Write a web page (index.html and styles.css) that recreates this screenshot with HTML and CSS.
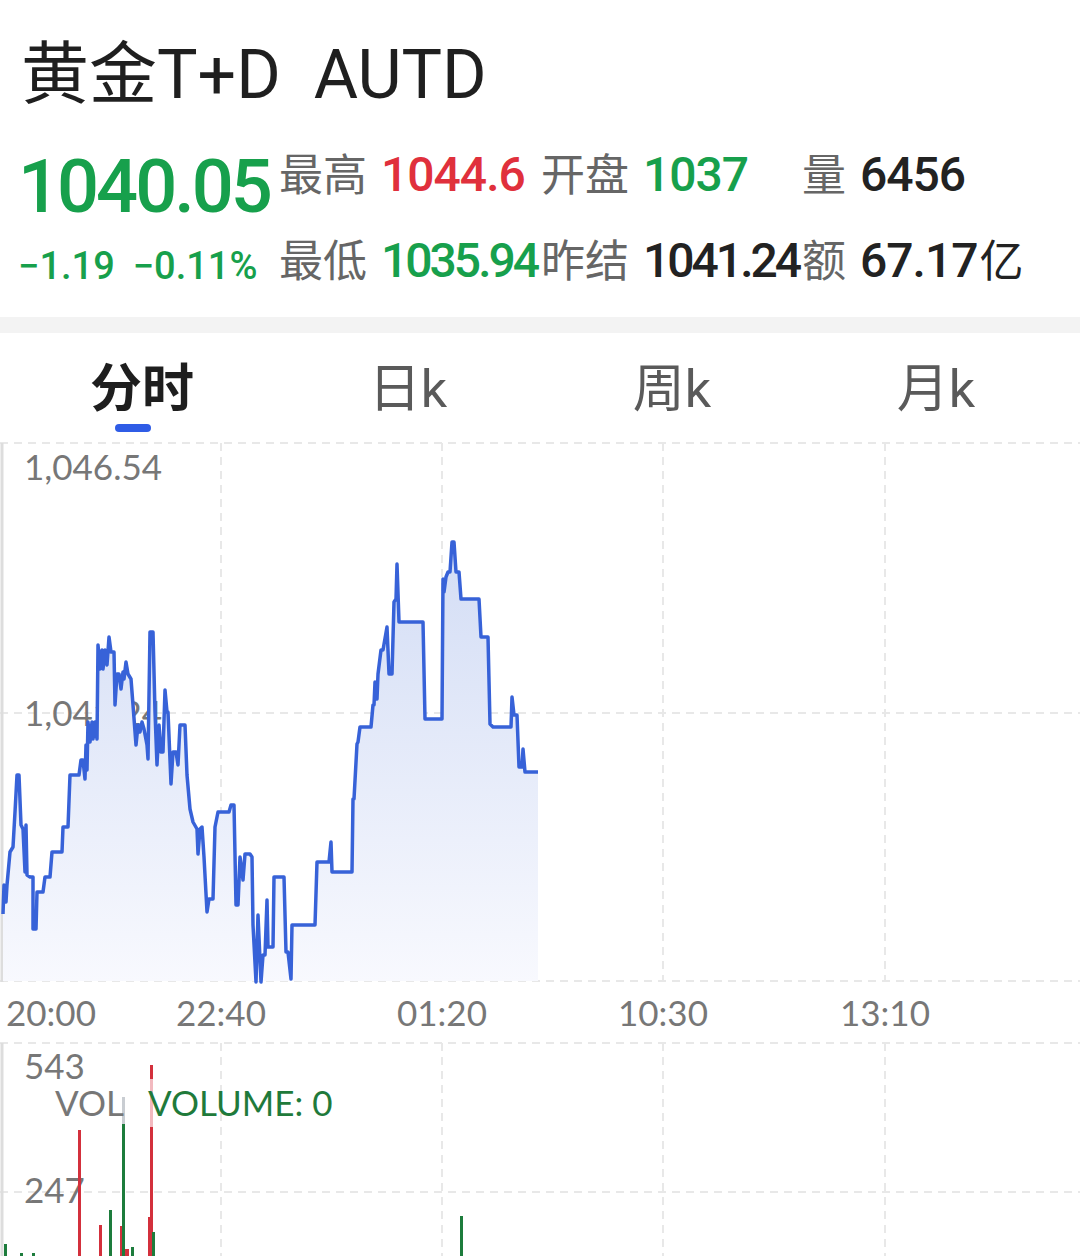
FILE: index.html
```html
<!DOCTYPE html>
<html lang="zh-CN">
<head>
<meta charset="utf-8">
<title>黄金T+D AUTD</title>
<link rel="stylesheet" href="styles.css">
</head>
<body>
<div class="page">
  <header class="head">
    <h1 class="title">黄金T+D AUTD</h1>
    <div class="quote">
      <div class="big">1040.05</div>
      <div class="cell"><span class="lbl">最高</span><span class="num red">1044.6</span></div>
      <div class="cell"><span class="lbl">开盘</span><span class="num green">1037</span></div>
      <div class="cell"><span class="lbl">量</span><span class="num dark">6456</span></div>
      <div class="change"><span>−1.19</span><span>−0.11%</span></div>
      <div class="cell r2"><span class="lbl">最低</span><span class="num green tight">1035.94</span></div>
      <div class="cell r2"><span class="lbl">昨结</span><span class="num dark tight">1041.24</span></div>
      <div class="cell r2"><span class="lbl">额</span><span class="num dark">67.17<span class="unit">亿</span></span></div>
    </div>
  </header>
  <div class="band"></div>
  <nav class="tabs">
    <div class="tab active"><span class="tab-text">分时</span><span class="ind"></span></div>
    <div class="tab"><span class="tab-text">日k</span></div>
    <div class="tab"><span class="tab-text">周k</span></div>
    <div class="tab"><span class="tab-text">月k</span></div>
  </nav>
  <section class="chart">
    <svg class="price-svg" width="1080" height="600" viewBox="0 438 1080 600">
      <defs>
        <linearGradient id="fillg" x1="0" y1="540" x2="0" y2="980" gradientUnits="userSpaceOnUse">
          <stop offset="0" stop-color="#d3ddf5"/>
          <stop offset="1" stop-color="#f8f9fe"/>
        </linearGradient>
      </defs>
      <line class="grid" x1="0" y1="441" x2="1080" y2="441"/>
      <line class="grid" x1="0" y1="711" x2="1080" y2="711"/>
      <line class="grid" x1="0" y1="979" x2="1080" y2="979"/>
      <line class="grid" x1="221" y1="441" x2="221" y2="979"/>
      <line class="grid" x1="442" y1="441" x2="442" y2="979"/>
      <line class="grid" x1="663" y1="441" x2="663" y2="979"/>
      <line class="grid" x1="885" y1="441" x2="885" y2="979"/>
      <line class="axis" x1="2" y1="441" x2="2" y2="980"/>
      <text class="ax-label" x="24" y="478">1,046.54</text>
      <text class="ax-label" x="24" y="724">1,041.24</text>
      <text class="ax-label" x="24" y="970">1,035.94</text>
      <path class="pfill" d="M3,979 L3,912 4,883 6,900 7,883 10,850 13,845 15,810 17,773 19,773 21,823 23,827 25,870 26,823 27,873 30,875 33,875 33,927 36,927 37,890 43,890 45,875 50,875 52,850 62,850 63,825 68,825 70,773 79,773 81,758 83,758 85,777 86,743 87,768 88,720 90,740 92,720 93,737 95,720 97,737 98,643 100,667 102,648 103,667 105,648 107,663 109,635 111,650 114,650 115,703 117,672 119,672 121,687 123,670 124,677 126,660 128,672 131,677 133,703 136,743 138,723 140,730 142,720 144,727 147,743 148,757 150,630 153,630 155,710 157,763 159,723 161,750 163,750 165,688 167,710 168,710 171,782 173,750 176,750 178,763 180,723 185,723 187,773 190,807 193,820 197,827 198,852 200,827 202,825 204,855 207,910 209,897 213,897 215,825 218,810 229,810 231,803 234,803 236,903 238,903 240,855 243,878 245,852 250,852 252,855 253,923 256,980 258,913 261,980 263,953 265,953 267,898 268,945 273,945 274,875 284,875 286,950 288,950 291,977 292,923 315,923 317,860 329,860 331,840 332,870 352,870 353,797 354,797 357,742 358,740 360,725 371,725 373,703 374,703 375,680 377,697 378,672 381,648 383,648 387,625 389,672 392,672 394,600 396,597 397,562 399,620 423,620 425,717 442,717 443,577 444,590 446,575 448,570 450,570 452,540 454,540 456,570 459,570 461,597 479,597 481,635 488,635 490,722 493,725 511,725 512,695 514,713 517,713 519,765 522,765 523,747 525,770 538,770 L538,979 Z"/>
      <polyline class="pline" points="3,912 4,883 6,900 7,883 10,850 13,845 15,810 17,773 19,773 21,823 23,827 25,870 26,823 27,873 30,875 33,875 33,927 36,927 37,890 43,890 45,875 50,875 52,850 62,850 63,825 68,825 70,773 79,773 81,758 83,758 85,777 86,743 87,768 88,720 90,740 92,720 93,737 95,720 97,737 98,643 100,667 102,648 103,667 105,648 107,663 109,635 111,650 114,650 115,703 117,672 119,672 121,687 123,670 124,677 126,660 128,672 131,677 133,703 136,743 138,723 140,730 142,720 144,727 147,743 148,757 150,630 153,630 155,710 157,763 159,723 161,750 163,750 165,688 167,710 168,710 171,782 173,750 176,750 178,763 180,723 185,723 187,773 190,807 193,820 197,827 198,852 200,827 202,825 204,855 207,910 209,897 213,897 215,825 218,810 229,810 231,803 234,803 236,903 238,903 240,855 243,878 245,852 250,852 252,855 253,923 256,980 258,913 261,980 263,953 265,953 267,898 268,945 273,945 274,875 284,875 286,950 288,950 291,977 292,923 315,923 317,860 329,860 331,840 332,870 352,870 353,797 354,797 357,742 358,740 360,725 371,725 373,703 374,703 375,680 377,697 378,672 381,648 383,648 387,625 389,672 392,672 394,600 396,597 397,562 399,620 423,620 425,717 442,717 443,577 444,590 446,575 448,570 450,570 452,540 454,540 456,570 459,570 461,597 479,597 481,635 488,635 490,722 493,725 511,725 512,695 514,713 517,713 519,765 522,765 523,747 525,770 538,770"/>
      <text class="ax-label" x="6" y="1024">20:00</text>
      <text class="ax-label mid" x="221" y="1024">22:40</text>
      <text class="ax-label mid" x="442" y="1024">01:20</text>
      <text class="ax-label mid" x="663" y="1024">10:30</text>
      <text class="ax-label mid" x="885" y="1024">13:10</text>
    </svg>
  </section>
  <section class="volume">
    <svg class="vol-svg" width="1080" height="218" viewBox="0 1038 1080 218">
      <line class="grid" x1="0" y1="1041" x2="1080" y2="1041"/>
      <line class="grid" x1="0" y1="1190" x2="1080" y2="1190"/>
      <line class="grid" x1="221" y1="1041" x2="221" y2="1256"/>
      <line class="grid" x1="442" y1="1041" x2="442" y2="1256"/>
      <line class="grid" x1="663" y1="1041" x2="663" y2="1256"/>
      <line class="grid" x1="885" y1="1041" x2="885" y2="1256"/>
      <line class="axis" x1="2" y1="1041" x2="2" y2="1256"/>
      <text class="ax-label" x="24" y="1077">543</text>
      <text class="ax-label" x="24" y="1201">247</text>
      <rect class="bar-g" x="4" y="1242" width="3" height="14"/>
      <rect class="bar-g" x="20" y="1251" width="3" height="5"/>
      <rect class="bar-g" x="32" y="1251" width="3" height="5"/>
      <rect class="bar-r" x="78" y="1128" width="3" height="128"/>
      <rect class="bar-r" x="99" y="1223" width="3" height="33"/>
      <rect class="bar-g" x="109" y="1208" width="3" height="48"/>
      <rect class="bar-hl" x="122" y="1095" width="3" height="27"/>
      <rect class="bar-g" x="122" y="1122" width="3" height="134"/>
      <rect class="bar-r" x="120" y="1224" width="2" height="32"/>
      <rect class="bar-r" x="125" y="1247" width="4" height="9"/>
      <rect class="bar-g" x="131" y="1245" width="3" height="11"/>
      <rect class="bar-r" x="150" y="1063" width="3" height="193"/>
      <rect class="bar-pk" x="150" y="1077" width="3" height="48"/>
      <rect class="bar-r" x="148" y="1215" width="3" height="41"/>
      <rect class="bar-g" x="152" y="1230" width="3" height="26"/>
      <rect class="bar-g" x="460" y="1214" width="3" height="42"/>
      <text class="ax-label" x="55" y="1114">VOL</text>
      <text class="ax-label vol-g" x="148" y="1114">VOLUME: 0</text>
    </svg>
  </section>
</div>
</body>
</html>
```

FILE: styles.css
```css
html, body {
  margin: 0;
  padding: 0;
  background: #ffffff;
}

body {
  font-family: Roboto, "Noto Sans CJK SC", sans-serif;
  color: #222222;
}

.page {
  width: 1080px;
  height: 1256px;
  overflow: hidden;
}

.title {
  margin: 0;
  padding: 35px 0 0 21px;
  height: 80px;
  line-height: 80px;
  font-size: 68px;
  font-weight: 400;
  color: #1f1f1f;
  word-spacing: 16px;
  white-space: nowrap;
}

.quote {
  display: grid;
  grid-template-columns: 257px 262px 261px 1fr;
  grid-template-rows: 90px 82px;
  margin-top: 15px;
  padding-left: 22px;
}

.big {
  font-size: 74px;
  line-height: 66px;
  padding-top: 24px;
  font-weight: 500;
  letter-spacing: -3px;
  color: #17a04c;
  margin-left: -4px;
  white-space: nowrap;
}

.cell {
  display: flex;
  align-items: baseline;
  line-height: 90px;
  white-space: nowrap;
}

.cell.r2 {
  line-height: 82px;
}

.lbl {
  font-size: 44px;
  color: #666666;
  margin-right: 14px;
}

.num {
  font-size: 48px;
  font-weight: 500;
  letter-spacing: -1px;
}

.num.tight {
  letter-spacing: -3px;
}

.unit {
  font-size: 44px;
  font-weight: 400;
  letter-spacing: 0;
  margin-left: 2px;
}

.red { color: #e0303c; }
.green { color: #17a04c; }
.dark { color: #222222; }

.change {
  display: flex;
  gap: 18px;
  font-size: 38px;
  font-weight: 500;
  line-height: 72px;
  padding-top: 10px;
  margin-left: -4px;
  color: #17a04c;
  white-space: nowrap;
}

.band {
  height: 16px;
  margin-top: 15px;
  background: #f3f3f3;
}

.tabs {
  display: grid;
  grid-template-columns: repeat(4, 264px);
  padding: 0 12px;
  height: 107px;
}

.tab {
  display: flex;
  flex-direction: column;
  align-items: center;
  padding-top: 25px;
}

.tab-text {
  font-size: 52px;
  line-height: 64px;
  color: #5a5a5a;
  white-space: nowrap;
}

.tab.active .tab-text {
  color: #1e1e1e;
  font-weight: 700;
  margin-right: 4px;
}

.ind {
  display: block;
  width: 36px;
  height: 8px;
  margin-top: 2px;
  margin-right: 22px;
  border-radius: 4px;
  background: #2f5ce6;
}

.chart, .volume {
  display: block;
}

.price-svg, .vol-svg {
  display: block;
}

.grid {
  stroke: #e8e8e8;
  stroke-width: 2;
  stroke-dasharray: 8 6;
}

.axis {
  stroke: #dddddd;
  stroke-width: 3;
}

.ax-label {
  font-family: Lato, "Noto Sans", sans-serif;
  font-size: 35px;
  fill: #777777;
}

.ax-label.mid {
  text-anchor: middle;
}

.ax-label.vol-g {
  fill: #1f7a3b;
}

.pfill {
  fill: url(#fillg);
}

.pline {
  fill: none;
  stroke: #3762d8;
  stroke-width: 3.5;
  stroke-linejoin: round;
}

.bar-r { fill: #d3303c; }
.bar-g { fill: #1d7c3c; }
.bar-hl { fill: #c9cdd2; }
.bar-pk { fill: #f2b9bf; }
```
